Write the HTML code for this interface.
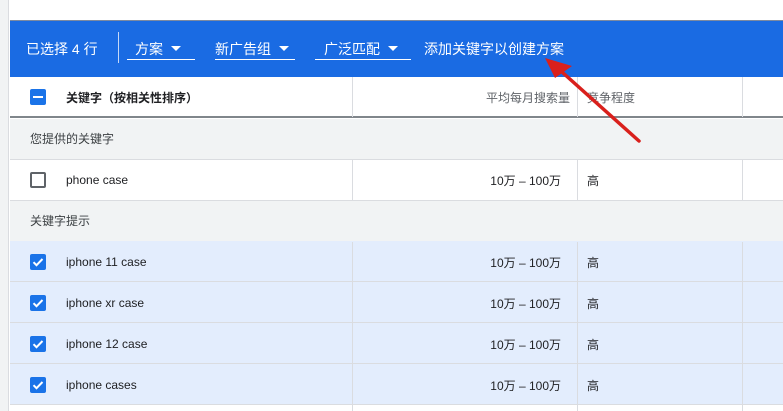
<!DOCTYPE html>
<html><head><meta charset="utf-8"><style>
*{margin:0;padding:0;box-sizing:border-box}
body{width:783px;height:411px;overflow:hidden;background:#fff;font-family:"Liberation Sans","Noto Sans CJK SC",sans-serif;position:relative;color:#3c4043}
.a{position:absolute}
.strip{left:0;top:0;width:9px;height:411px;background:#f1f3f4;border-right:1px solid #dadce0}
.bar{left:10px;top:20px;width:773px;height:57px;background:#1a6be3;border-top:1px solid #7d8aa0}
.bt{color:#fff;font-size:14px;top:39px}
.dd{top:39px;color:#fff;font-size:14px;border-bottom:1px solid #fff;height:21px}
.dd i{display:inline-block;width:0;height:0;border-left:5px solid transparent;border-right:5px solid transparent;border-top:5px solid #fff;vertical-align:middle;margin-left:8px;margin-top:-3px}
.row{left:10px;width:773px;height:41px;border-bottom:1px solid #dadce0}
.g{background:#f1f3f4;font-size:12px;color:#3c4043;line-height:16px}
.s{background:#e3edfd}
.vl{width:1px;background:#dadce0}
.cb{left:30px;width:16px;height:16px;border-radius:2px}
.t{font-size:12px;color:#202124;line-height:16px;height:16px}
</style></head><body>
<div class="a strip"></div>
<div class="a" style="left:10px;top:0;width:773px;height:19px;background:#fff"></div>
<div class="a bar"></div>
<div class="a bt" style="left:26px">已选择 4 行</div>
<div class="a" style="left:118px;top:32px;width:1px;height:31px;background:#c5d8f7"></div>
<div class="a dd" style="left:127px;width:68px;padding-left:8px">方案<i></i></div>
<div class="a dd" style="left:215px;width:80px">新广告组<i></i></div>
<div class="a dd" style="left:315px;width:96px;padding-left:9px">广泛匹配<i></i></div>
<div class="a bt" style="left:424px">添加关键字以创建方案</div>

<div class="a" style="left:10px;top:77px;width:773px;height:41px;border-bottom:2px solid #80868b;background:#fff"></div>
<div class="a cb" style="top:89px;background:#1a73e8"><div class="a" style="left:3px;top:7px;width:10px;height:2px;background:#fff"></div></div>
<div class="a t" style="left:66px;top:90px;font-weight:bold">关键字（按相关性排序）</div>
<div class="a t" style="left:470px;top:90px;width:100px;text-align:right;color:#5f6368">平均每月搜索量</div>
<div class="a t" style="left:587px;top:90px;color:#5f6368">竞争程度</div>

<div class="a row g" style="top:119px;height:41px"><span class="a" style="left:20px;top:12px">您提供的关键字</span></div>
<div class="a row" style="top:160px"></div>
<div class="a cb" style="top:172px;border:2px solid #5f6368"></div>
<div class="a t" style="left:66px;top:172px">phone case</div>
<div class="a t" style="left:470px;top:173px;width:91px;text-align:right">10万 – 100万</div>
<div class="a t" style="left:587px;top:173px">高</div>
<div class="a row g" style="top:201px"><span class="a" style="left:20px;top:12px">关键字提示</span></div>

<div class="a row s" style="top:241px"></div>
<div class="a row s" style="top:282px"></div>
<div class="a row s" style="top:323px"></div>
<div class="a row s" style="top:364px"></div>

<div class="a vl" style="left:352px;top:77px;height:40px"></div>
<div class="a vl" style="left:577px;top:77px;height:40px"></div>
<div class="a vl" style="left:742px;top:77px;height:40px"></div>
<div class="a vl" style="left:352px;top:160px;height:40px"></div>
<div class="a vl" style="left:577px;top:160px;height:40px"></div>
<div class="a vl" style="left:742px;top:160px;height:40px"></div>
<div class="a vl" style="left:352px;top:242px;height:169px"></div>
<div class="a vl" style="left:577px;top:242px;height:169px"></div>
<div class="a vl" style="left:742px;top:242px;height:169px"></div>

<svg class="a" style="left:30px;top:254px" width="16" height="16"><rect width="16" height="16" rx="2" fill="#1a73e8"/><path d="M3.5 8.2l3 3 6-6.2" stroke="#fff" stroke-width="2" fill="none"/></svg>
<svg class="a" style="left:30px;top:295px" width="16" height="16"><rect width="16" height="16" rx="2" fill="#1a73e8"/><path d="M3.5 8.2l3 3 6-6.2" stroke="#fff" stroke-width="2" fill="none"/></svg>
<svg class="a" style="left:30px;top:336px" width="16" height="16"><rect width="16" height="16" rx="2" fill="#1a73e8"/><path d="M3.5 8.2l3 3 6-6.2" stroke="#fff" stroke-width="2" fill="none"/></svg>
<svg class="a" style="left:30px;top:377px" width="16" height="16"><rect width="16" height="16" rx="2" fill="#1a73e8"/><path d="M3.5 8.2l3 3 6-6.2" stroke="#fff" stroke-width="2" fill="none"/></svg>

<div class="a t" style="left:66px;top:254px">iphone 11 case</div>
<div class="a t" style="left:66px;top:295px">iphone xr case</div>
<div class="a t" style="left:66px;top:336px">iphone 12 case</div>
<div class="a t" style="left:66px;top:377px">iphone cases</div>
<div class="a t" style="left:470px;top:255px;width:91px;text-align:right">10万 – 100万</div>
<div class="a t" style="left:470px;top:296px;width:91px;text-align:right">10万 – 100万</div>
<div class="a t" style="left:470px;top:337px;width:91px;text-align:right">10万 – 100万</div>
<div class="a t" style="left:470px;top:378px;width:91px;text-align:right">10万 – 100万</div>
<div class="a t" style="left:587px;top:255px">高</div>
<div class="a t" style="left:587px;top:296px">高</div>
<div class="a t" style="left:587px;top:337px">高</div>
<div class="a t" style="left:587px;top:378px">高</div>

<svg class="a" style="left:0;top:0" width="783" height="411">
<line x1="639" y1="141" x2="562" y2="72" stroke="#d9201c" stroke-width="3.5" stroke-linecap="round"/>
<polygon points="545,58 572,66 555,78" fill="#d9201c"/>
</svg>
</body></html>
